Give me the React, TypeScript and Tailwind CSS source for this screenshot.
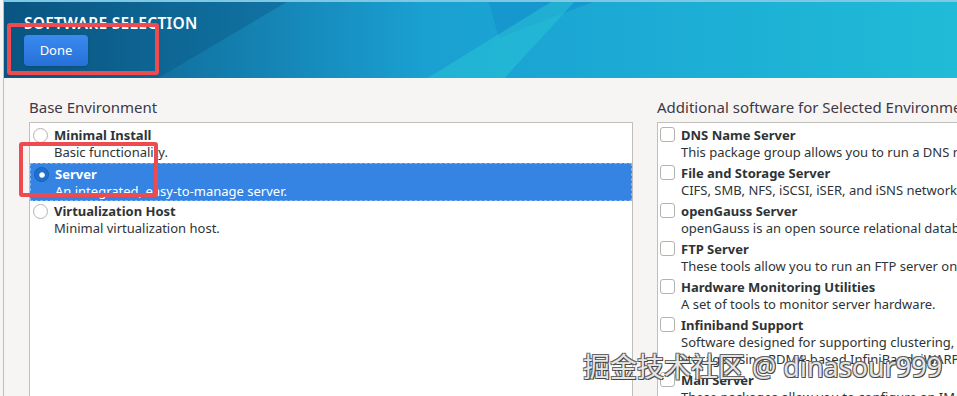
import { Circle } from 'lucide-react';

const baseEnvs = [
  { name: 'Minimal Install', desc: 'Basic functionality.' },
  { name: 'Server', desc: 'An integrated, easy-to-manage server.', selected: true },
  { name: 'Virtualization Host', desc: 'Minimal virtualization host.' },
];

const addons = [
  { name: 'DNS Name Server', desc: ['This package group allows you to run a DNS name server (BIND) on the system.'] },
  { name: 'File and Storage Server', desc: ['CIFS, SMB, NFS, iSCSI, iSER, and iSNS network storage server.'] },
  { name: 'openGauss Server', desc: ['openGauss is an open source relational database management system.'] },
  { name: 'FTP Server', desc: ['These tools allow you to run an FTP server on the system.'] },
  { name: 'Hardware Monitoring Utilities', desc: ['A set of tools to monitor server hardware.'] },
  {
    name: 'Infiniband Support',
    desc: [
      'Software designed for supporting clustering, grid connectivity, and low-latency, high bandwidth',
      'storage using RDMA-based InfiniBand, iWARP, RoCE, and OPA fabrics.',
    ],
  },
  { name: 'Mail Server', desc: ['These packages allow you to configure an IMAP or SMTP mail server.'] },
];

function Radio({ checked }: { checked?: boolean }) {
  return (
    <span
      className={
        'mt-[1px] flex h-[15px] w-[15px] shrink-0 items-center justify-center rounded-full border ' +
        (checked ? 'border-[#1c5fb0] bg-[#1f6fd0]' : 'border-[#b5b3ae] bg-white')
      }
    >
      {checked && <Circle className="h-[6px] w-[6px] fill-white text-white" />}
    </span>
  );
}

function Header() {
  return (
    <div className="relative h-[78px] overflow-hidden bg-gradient-to-r from-[#0c5784] via-[#1aa0d2] via-40% to-[#22c0d8]">
      <svg className="absolute inset-0 h-full w-full" viewBox="0 0 957 78" preserveAspectRatio="none">
        <polygon points="440,0 540,0 450,38" fill="#1490cc" opacity="0.6" />
        <polygon points="385,78 455,78 520,0 500,0" fill="#2ccad8" opacity="0.45" />
        <polygon points="0,0 260,0 140,78 0,78" fill="#0a4f7c" opacity="0.35" />
      </svg>
      <div className="absolute inset-x-0 top-0 h-[2px] bg-[#7fc8e4]" />
      <div className="relative flex flex-col items-start pl-[20px] pt-[12px]">
        <div className="text-[15.5px] font-semibold tracking-[0.3px] text-white">SOFTWARE SELECTION</div>
        <button className="h-[31px] w-[64px] rounded-[4px] bg-gradient-to-b from-[#3a8af0] to-[#2670d8] text-[13px] text-white shadow-sm">
          Done
        </button>
      </div>
    </div>
  );
}

export default function App() {
  return (
    <div
      className="relative h-[396px] w-[957px] overflow-hidden bg-[#f6f5f4] text-[#2e3436]"
      style={{ fontFamily: '"Noto Sans", "Open Sans", sans-serif' }}
    >
      <div className="flex h-full pl-[3px]">
        <div className="flex-1 border-l border-[#c0bfbc]">
          <Header />
          <div className="flex gap-[24px] pl-[25px] pt-[19px]">
            <div className="w-[604px] shrink-0">
              <div className="mb-[5px] text-[15px] leading-[20px] text-[#3d3846]">Base Environment</div>
              <div className="h-[300px] border border-[#c0bfbc] bg-white pt-[2px]">
                {baseEnvs.map((env) => (
                  <div
                    key={env.name}
                    className={
                      'flex h-[38px] gap-[6px] pl-[3px] pt-[2px] ' +
                      (env.selected
                        ? 'border border-dashed border-[#7fb2f0] bg-[#3584e4] text-white'
                        : '')
                    }
                  >
                    <Radio checked={env.selected} />
                    <div className="text-[13px] leading-[17px]">
                      <div className="font-bold">{env.name}</div>
                      <div>{env.desc}</div>
                    </div>
                  </div>
                ))}
              </div>
            </div>
            <div className="min-w-0 flex-1">
              <div className="mb-[5px] whitespace-nowrap text-[15px] leading-[20px] text-[#3d3846]">
                Additional software for Selected Environment
              </div>
              <div className="h-[300px] w-[400px] border border-[#c0bfbc] bg-white pt-[4px]">
                {addons.map((a) => (
                  <div key={a.name} className="flex gap-[6px] pl-[2px] pb-[4px]">
                    <span className="h-[15px] w-[15px] shrink-0 rounded-[3px] border border-[#b5b3ae] bg-white" />
                    <div className="whitespace-nowrap text-[13px] leading-[17px]">
                      <div className="font-bold">{a.name}</div>
                      {a.desc.map((d) => (
                        <div key={d}>{d}</div>
                      ))}
                    </div>
                  </div>
                ))}
              </div>
            </div>
          </div>
        </div>
      </div>

      {/* annotation boxes */}
      <div className="absolute left-[7px] top-[23px] h-[52px] w-[152px] rounded-[3px] border-[4px] border-[#ee4b50]" />
      <div className="absolute left-[19px] top-[142px] h-[55px] w-[139px] rounded-[3px] border-[4px] border-[#ee4b50]" />

      {/* watermark */}
      <div
        className="absolute left-[583px] top-[350px] whitespace-nowrap text-[27px] leading-[34px] text-[#e6e6e6]"
        style={{
          fontFamily: '"Noto Sans", "Noto Sans CJK SC", sans-serif',
          textShadow: '1px 1px 0 #444, -1px -1px 0 #666, 1px -1px 0 #666, -1px 1px 0 #666',
        }}
      >
        掘金技术社区 @ dinasour999
      </div>
    </div>
  );
}
